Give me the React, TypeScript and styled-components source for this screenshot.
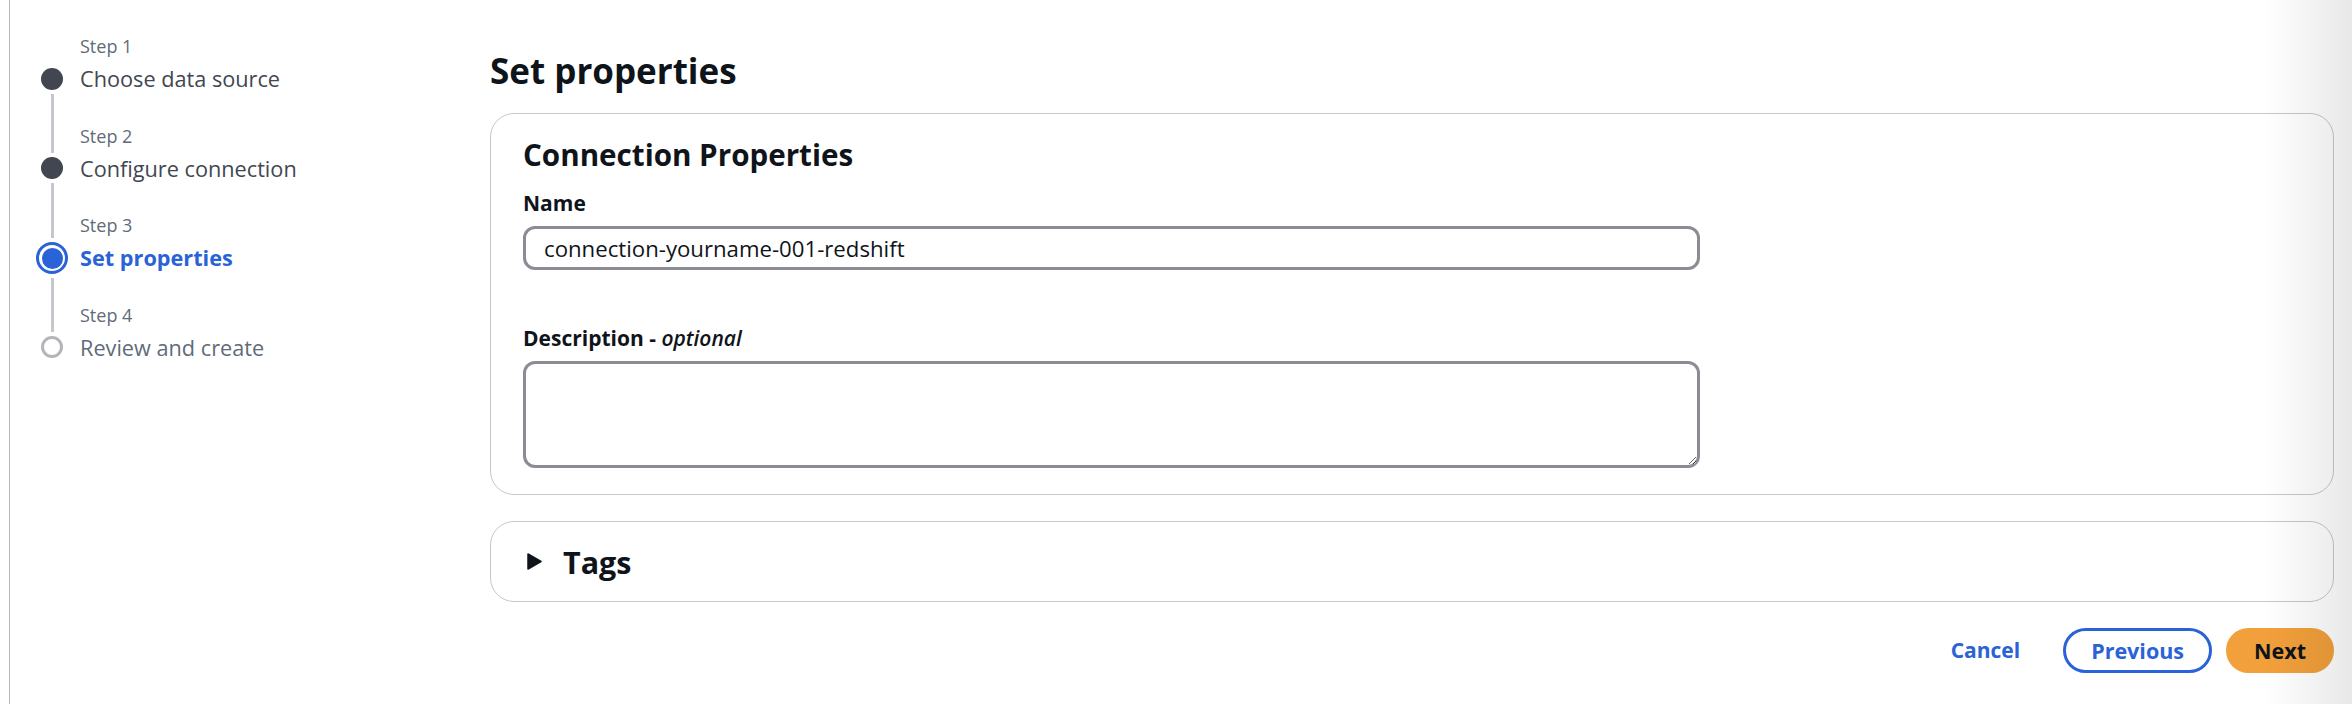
import React from 'react'
import styled, { createGlobalStyle } from 'styled-components'

const GlobalStyle = createGlobalStyle`
  html, body {
    margin: 0;
    padding: 0;
    background: #ffffff;
  }
  body {
    font-family: "Open Sans", "Noto Sans", sans-serif;
    color: #0f141a;
  }
  * {
    box-sizing: border-box;
  }
`

const BLUE = '#2a62d8'

const Page = styled.div`
  position: relative;
  display: flex;
  width: 2352px;
  height: 704px;
  overflow: hidden;

  &::after {
    content: '';
    position: absolute;
    top: 0;
    right: 0;
    bottom: 0;
    width: 88px;
    background: linear-gradient(to right, rgba(0, 0, 0, 0), rgba(0, 0, 0, 0.09));
    pointer-events: none;
  }
`

const Sidebar = styled.nav`
  flex: none;
  width: 481px;
  margin-left: 9px;
  border-left: 1px solid #b5b5b9;
  padding: 33px 0 0 20px;
`

const StepList = styled.ol`
  list-style: none;
  margin: 0;
  padding: 0;
`

const StepItem = styled.li`
  display: flex;
  align-items: stretch;
`

const IconCol = styled.div`
  width: 44px;
  flex: none;
  display: flex;
  flex-direction: column;
  align-items: center;
`

const Segment = styled.div<{ $h?: number; $hidden?: boolean; $grow?: boolean }>`
  width: 3px;
  background: ${p => (p.$hidden ? 'transparent' : '#c6c6cd')};
  ${p => (p.$grow ? 'flex: 1;' : `height: ${p.$h}px; flex: none;`)}
`

type StepState = 'done' | 'active' | 'todo'

const Dot = styled.span<{ $state: StepState }>`
  display: block;
  flex: none;
  border-radius: 50%;
  margin: 4px 0;
  ${p =>
    p.$state === 'done' &&
    `
    width: 22px;
    height: 22px;
    background: #424650;
  `}
  ${p =>
    p.$state === 'todo' &&
    `
    width: 22px;
    height: 22px;
    border: 3px solid #b4b4bb;
    background: #fff;
  `}
  ${p =>
    p.$state === 'active' &&
    `
    width: 32px;
    height: 32px;
    border: 3.5px solid ${BLUE};
    padding: 2.5px;
    background: ${BLUE};
    background-clip: content-box;
  `}
`

const TextCol = styled.div`
  padding: 0 0 27.5px 6px;
`

const StepLabel = styled.div`
  font-size: 18px;
  line-height: 27px;
  color: #5f6b7a;
  margin-bottom: 2px;
`

const StepTitle = styled.div<{ $state: StepState }>`
  font-size: 21.7px;
  line-height: 33px;
  font-weight: ${p => (p.$state === 'active' ? 700 : 400)};
  color: ${p => (p.$state === 'active' ? BLUE : p.$state === 'done' ? '#414750' : '#5f6b7a')};
`

const Main = styled.main`
  flex: 1;
  padding: 49px 18px 0 0;
`

const PageTitle = styled.h1`
  margin: 0 0 20px;
  font-size: 35px;
  line-height: 44px;
  font-weight: 700;
  color: #0f141a;
`

const Panel = styled.section`
  border: 1.5px solid #c6c6cd;
  border-radius: 24px;
  padding: 21px 32px 26px;
  background: #fff;
`

const PanelTitle = styled.h2`
  margin: 0;
  font-size: 29.6px;
  line-height: 40px;
  font-weight: 700;
  color: #0f141a;
`

const Field = styled.div<{ $top: number }>`
  margin-top: ${p => p.$top}px;
`

const Label = styled.label`
  display: block;
  font-size: 21px;
  line-height: 30px;
  font-weight: 700;
  color: #0f141a;

  i {
    font-weight: 600;
  }
`

const TextInput = styled.input`
  display: block;
  margin-top: 8.5px;
  width: 1177px;
  height: 44px;
  border: 3px solid #8c8c94;
  border-radius: 12px;
  padding: 0 18px;
  font-family: inherit;
  font-size: 22.2px;
  color: #0f141a;
  background: #fff;
  outline: none;
`

const TextArea = styled.textarea`
  display: block;
  margin-top: 8px;
  width: 1177px;
  height: 107px;
  border: 3px solid #8c8c94;
  border-radius: 12px;
  padding: 6px 18px;
  font-family: inherit;
  font-size: 21px;
  background: #fff;
  outline: none;
`

const Expandable = styled.section`
  margin-top: 26.5px;
  height: 81px;
  border: 1.5px solid #c6c6cd;
  border-radius: 24px;
  display: flex;
  align-items: center;
  gap: 21px;
  padding-left: 36px;
  background: #fff;
`

const ExpandTitle = styled.h2`
  margin: 0;
  font-size: 30.5px;
  line-height: 40px;
  font-weight: 700;
  color: #0f141a;
`

const Footer = styled.div`
  margin-top: 25.5px;
  display: flex;
  justify-content: flex-end;
  gap: 14px;
`

type Variant = 'link' | 'normal' | 'primary'

const Button = styled.button<{ $variant: Variant }>`
  height: 45px;
  padding: 0 ${p => (p.$variant === 'link' ? 26 : 25)}px;
  border-radius: 23px;
  border: 3px solid
    ${p => (p.$variant === 'normal' ? BLUE : p.$variant === 'primary' ? '#f2a03b' : 'transparent')};
  background: ${p => (p.$variant === 'primary' ? '#f2a03b' : '#fff')};
  color: ${p => (p.$variant === 'primary' ? '#0f141a' : BLUE)};
  font-family: inherit;
  font-size: ${p => (p.$variant === 'link' ? 21 : 21.5)}px;
  font-weight: 700;
  cursor: pointer;
`

const steps: { n: number; title: string; state: StepState }[] = [
  { n: 1, title: 'Choose data source', state: 'done' },
  { n: 2, title: 'Configure connection', state: 'done' },
  { n: 3, title: 'Set properties', state: 'active' },
  { n: 4, title: 'Review and create', state: 'todo' },
]

const CaretRight = () => (
  <svg width="15" height="17" viewBox="0 0 15 17">
    <path d="M1 1 L14 8.5 L1 16 Z" fill="#0f141a" stroke="#0f141a" strokeWidth="1.5" strokeLinejoin="round" />
  </svg>
)

export default function App() {
  return (
    <>
      <GlobalStyle />
      <Page>
        <Sidebar>
          <StepList>
            {steps.map((s, i) => {
              const d = s.state === 'active' ? 32 : 22
              return (
                <StepItem key={s.n}>
                  <IconCol>
                    <Segment $h={29 + (33 - d) / 2 - 4} $hidden={i === 0} />
                    <Dot $state={s.state} />
                    <Segment $grow $hidden={i === steps.length - 1} />
                  </IconCol>
                  <TextCol>
                    <StepLabel>Step {s.n}</StepLabel>
                    <StepTitle $state={s.state}>{s.title}</StepTitle>
                  </TextCol>
                </StepItem>
              )
            })}
          </StepList>
        </Sidebar>
        <Main>
          <PageTitle>Set properties</PageTitle>
          <Panel>
            <PanelTitle>Connection Properties</PanelTitle>
            <Field $top={12.6}>
              <Label htmlFor="conn-name">Name</Label>
              <TextInput id="conn-name" defaultValue="connection-yourname-001-redshift" />
            </Field>
            <Field $top={52.5}>
              <Label htmlFor="conn-desc">
                Description - <i>optional</i>
              </Label>
              <TextArea id="conn-desc" />
            </Field>
          </Panel>
          <Expandable>
            <CaretRight />
            <ExpandTitle>Tags</ExpandTitle>
          </Expandable>
          <Footer>
            <Button $variant="link">Cancel</Button>
            <Button $variant="normal">Previous</Button>
            <Button $variant="primary">Next</Button>
          </Footer>
        </Main>
      </Page>
    </>
  )
}
